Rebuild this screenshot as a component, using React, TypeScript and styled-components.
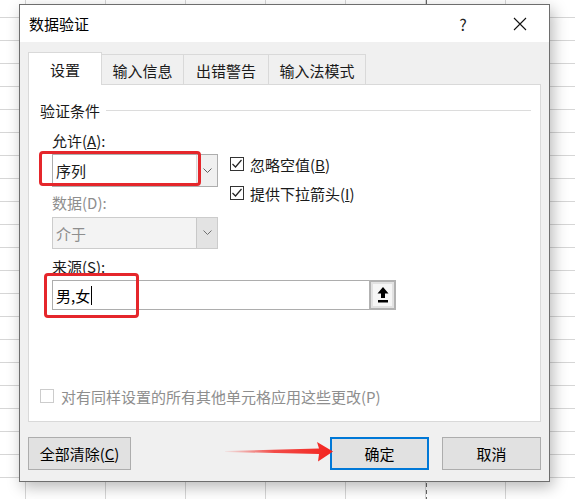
import styled, { createGlobalStyle } from 'styled-components';

const GlobalStyle = createGlobalStyle`
  html, body {
    margin: 0;
    padding: 0;
  }

  body {
    width: 575px;
    height: 499px;
    overflow: hidden;
    font-family: "Microsoft YaHei", "Noto Sans CJK SC", sans-serif;
    color: #1a1a1a;
    background-color: #fff;
    background-image:
      linear-gradient(to bottom, #666 4px, transparent 4px),
      linear-gradient(to right, #d6d6d6 1px, transparent 1px),
      linear-gradient(to bottom, #d6d6d6 1px, transparent 1px);
    background-size: 1px 7px, 80px 23px, 80px 23px;
    background-position: 426px 0, 25px 17px, 25px 17px;
    background-repeat: repeat-y, repeat, repeat;
  }
`;

const Page = styled.div`
  padding: 4px 0 0 19px;
`;

const Dialog = styled.div`
  box-sizing: border-box;
  width: 531px;
  height: 478px;
  display: flex;
  flex-direction: column;
  border: 1px solid #6e6e6e;
  background: #f0f0f0;
  box-shadow: 3px 5px 14px rgba(0, 0, 0, 0.28);
`;

const TitleBar = styled.div`
  height: 37px;
  display: flex;
  align-items: center;
  padding-left: 9px;
  background: #fff;
  font-size: 15px;
  color: #000;
`;

const Title = styled.div`
  flex: 1;
`;

const TitleButton = styled.div<{ $w: number; $mr: number }>`
  width: ${({ $w }) => $w}px;
  margin-right: ${({ $mr }) => $mr}px;
  height: 37px;
  display: flex;
  align-items: center;
  justify-content: center;
  font-size: 16px;
  color: #222;
`;

const Body = styled.div`
  flex: 1;
  display: flex;
  flex-direction: column;
  padding: 10px 8px 11px 8px;
`;

const TabList = styled.div`
  display: flex;
  align-items: flex-end;
  height: 32px;
  position: relative;
  z-index: 1;
`;

const Tab = styled.div<{ $w: number; $active?: boolean }>`
  box-sizing: border-box;
  width: ${({ $w }) => $w}px;
  height: ${({ $active }) => ($active ? 33 : 30)}px;
  margin-bottom: ${({ $active }) => ($active ? -1 : 0)}px;
  display: flex;
  align-items: center;
  justify-content: center;
  padding-top: 1px;
  border: 1px solid #d9d9d9;
  border-bottom: none;
  background: ${({ $active }) => ($active ? '#fff' : '#f0f0f0')};
  font-size: 15px;
  color: #1a1a1a;

  & + & {
    margin-left: -1px;
  }
`;

const Panel = styled.div`
  box-sizing: border-box;
  height: 338px;
  display: flex;
  flex-direction: column;
  background: #fff;
  border: 1px solid #d9d9d9;
`;

const GroupHeader = styled.div`
  margin-top: 15px;
  height: 20px;
  padding-left: 11px;
  display: flex;
  align-items: center;
  font-size: 15px;
`;

const HeaderLine = styled.div`
  flex: 1;
  height: 1px;
  margin: 0 9px 0 6px;
  background: #dcdcdc;
`;

const GroupBody = styled.div`
  padding-left: 23px;
  margin-top: 11px;
`;

const TopGrid = styled.div`
  display: grid;
  grid-template-columns: 166px 1fr;
  column-gap: 12px;
`;

const FieldLabel = styled.div<{ $mt?: number; $disabled?: boolean }>`
  grid-column: 1;
  height: 20px;
  line-height: 20px;
  margin-top: ${({ $mt }) => $mt ?? 0}px;
  font-size: 15px;
  color: ${({ $disabled }) => ($disabled ? '#8e8e8e' : '#1a1a1a')};
`;

const Combo = styled.div<{ $mt: number; $h: number; $disabled?: boolean }>`
  grid-column: 1;
  position: relative;
  box-sizing: border-box;
  height: ${({ $h }) => $h}px;
  margin-top: ${({ $mt }) => $mt}px;
  display: flex;
  border: 1px solid ${({ $disabled }) => ($disabled ? '#cccccc' : '#adadad')};
  background: ${({ $disabled }) => ($disabled ? '#f3f3f3' : '#fff')};
`;

const ComboText = styled.div<{ $disabled?: boolean }>`
  flex: 1;
  display: flex;
  align-items: center;
  padding-left: 3px;
  font-size: 15px;
  color: ${({ $disabled }) => ($disabled ? '#8e8e8e' : '#1a1a1a')};
`;

const ComboButton = styled.div<{ $disabled?: boolean }>`
  width: 20px;
  display: flex;
  align-items: center;
  justify-content: center;
  border-left: 1px solid ${({ $disabled }) => ($disabled ? '#c8c8c8' : '#dadada')};
  background: ${({ $disabled }) => ($disabled ? '#e3e3e3' : '#f0f0f0')};
`;

const RedMark = styled.div<{ $l: number; $t: number; $w: number; $h: number }>`
  position: absolute;
  left: ${({ $l }) => $l}px;
  top: ${({ $t }) => $t}px;
  width: ${({ $w }) => $w}px;
  height: ${({ $h }) => $h}px;
  box-sizing: border-box;
  border: 3px solid #e5262b;
  border-radius: 4px;
  pointer-events: none;
`;

const CheckGroup = styled.div`
  grid-column: 2;
  grid-row: 2 / span 3;
  align-self: start;
  display: flex;
  flex-direction: column;
  gap: 9px;
  padding-top: 3px;
`;

const CheckRow = styled.div<{ $disabled?: boolean }>`
  height: 20px;
  display: flex;
  align-items: center;
  font-size: 15px;
  color: ${({ $disabled }) => ($disabled ? '#8e8e8e' : '#1a1a1a')};
`;

const CheckBox = styled.div<{ $disabled?: boolean }>`
  box-sizing: border-box;
  width: 14px;
  height: 14px;
  margin-right: ${({ $disabled }) => ($disabled ? 7 : 6)}px;
  display: flex;
  align-items: center;
  justify-content: center;
  border: 1px solid ${({ $disabled }) => ($disabled ? '#cccccc' : '#333333')};
  background: #fff;
`;

const SourceRow = styled.div`
  position: relative;
  width: 344px;
  height: 30px;
  margin-top: 3px;
  display: flex;
`;

const SourceField = styled.div`
  flex: 1;
  box-sizing: border-box;
  display: flex;
  align-items: center;
  padding-left: 3px;
  border: 1px solid #adadad;
  border-right: none;
  font-size: 15px;
  color: #000;
`;

const Caret = styled.span`
  display: inline-block;
  width: 1px;
  height: 19px;
  margin-left: 1px;
  background: #000;
`;

const PickButton = styled.div`
  box-sizing: border-box;
  width: 27px;
  display: flex;
  align-items: center;
  justify-content: center;
  border: 2px solid #b2b2b2;
  background: #f6f6f6;
  box-shadow: inset 0 0 0 2px #e2e2e2;
`;

const BottomCheck = styled(CheckRow)`
  margin-top: auto;
  margin-bottom: 15px;
  padding-left: 11px;
`;

const Footer = styled.div`
  position: relative;
  margin-top: 15px;
  display: flex;
  align-items: center;
`;

const Button = styled.div<{ $w: number; $primary?: boolean }>`
  box-sizing: border-box;
  width: ${({ $w }) => $w}px;
  height: 33px;
  display: flex;
  align-items: center;
  justify-content: center;
  background: #e1e1e1;
  border: ${({ $primary }) => ($primary ? '2px solid #0078d7' : '1px solid #adadad')};
  font-size: 15px;
  color: #000;
`;

const Spacer = styled.div`
  flex: 1;
`;

const Arrow = styled.svg`
  position: absolute;
  left: 197px;
  top: 5px;
`;

const Chevron = ({ color }: { color: string }) => (
  <svg width="9" height="6" viewBox="0 0 9 6">
    <polyline points="0.5,0.5 4.5,4.5 8.5,0.5" fill="none" stroke={color} strokeWidth="1" />
  </svg>
);

const Check = () => (
  <svg width="12" height="12" viewBox="0 0 12 12">
    <polyline points="1.5,6 4.5,9 10.5,2" fill="none" stroke="#222" strokeWidth="1.2" />
  </svg>
);

export default function App() {
  return (
    <>
      <GlobalStyle />
      <Page>
        <Dialog>
          <TitleBar>
            <Title>数据验证</Title>
            <TitleButton $w={40} $mr={14}>?</TitleButton>
            <TitleButton $w={46} $mr={6}>
              <svg width="14" height="14" viewBox="0 0 14 14">
                <path d="M1 1 L13 13 M13 1 L1 13" stroke="#111" strokeWidth="1.1" />
              </svg>
            </TitleButton>
          </TitleBar>
          <Body>
            <TabList>
              <Tab $w={74} $active>设置</Tab>
              <Tab $w={83}>输入信息</Tab>
              <Tab $w={86}>出错警告</Tab>
              <Tab $w={98}>输入法模式</Tab>
            </TabList>
            <Panel>
              <GroupHeader>
                验证条件
                <HeaderLine />
              </GroupHeader>
              <GroupBody>
                <TopGrid>
                  <FieldLabel>
                    允许(<u>A</u>):
                  </FieldLabel>
                  <Combo $mt={3} $h={33}>
                    <ComboText>序列</ComboText>
                    <ComboButton>
                      <Chevron color="#606060" />
                    </ComboButton>
                    <RedMark $l={-14} $t={-4} $w={162} $h={35} />
                  </Combo>
                  <CheckGroup>
                    <CheckRow>
                      <CheckBox>
                        <Check />
                      </CheckBox>
                      忽略空值(<u>B</u>)
                    </CheckRow>
                    <CheckRow>
                      <CheckBox>
                        <Check />
                      </CheckBox>
                      提供下拉箭头(<u>I</u>)
                    </CheckRow>
                  </CheckGroup>
                  <FieldLabel $mt={6} $disabled>
                    数据(D):
                  </FieldLabel>
                  <Combo $mt={4} $h={32} $disabled>
                    <ComboText $disabled>介于</ComboText>
                    <ComboButton $disabled>
                      <Chevron color="#707070" />
                    </ComboButton>
                  </Combo>
                </TopGrid>
                <FieldLabel $mt={8}>
                  来源(<u>S</u>):
                </FieldLabel>
                <SourceRow>
                  <SourceField>
                    男,女
                    <Caret />
                  </SourceField>
                  <PickButton>
                    <svg width="12" height="17" viewBox="0 0 12 17">
                      <path d="M6 0 L11.5 6.5 L8 6.5 L8 11 L4 11 L4 6.5 L0.5 6.5 Z" fill="#000" />
                      <rect x="1" y="13" width="10" height="2.5" fill="#000" />
                    </svg>
                  </PickButton>
                  <RedMark $l={-8} $t={-7} $w={95} $h={45} />
                </SourceRow>
              </GroupBody>
              <BottomCheck $disabled>
                <CheckBox $disabled />
                对有同样设置的所有其他单元格应用这些更改(P)
              </BottomCheck>
            </Panel>
            <Footer>
              <Button $w={103}>
                全部清除(<u>C</u>)
              </Button>
              <Spacer />
              <Button $w={99} $primary style={{ marginRight: 13 }}>
                确定
              </Button>
              <Button $w={99}>取消</Button>
              <Arrow width="110" height="21" viewBox="0 0 110 21">
                <defs>
                  <linearGradient id="tail" x1="0" y1="0" x2="1" y2="0">
                    <stop offset="0" stopColor="#f3241f" stopOpacity="0.05" />
                    <stop offset="0.45" stopColor="#f3241f" stopOpacity="0.8" />
                    <stop offset="1" stopColor="#f3241f" stopOpacity="1" />
                  </linearGradient>
                </defs>
                <path
                  d="M0 9 L94 6.5 L92 0 L108 9.5 L93 19.5 L94 12 L0 10 Z"
                  fill="url(#tail)"
                />
              </Arrow>
            </Footer>
          </Body>
        </Dialog>
      </Page>
    </>
  );
}
